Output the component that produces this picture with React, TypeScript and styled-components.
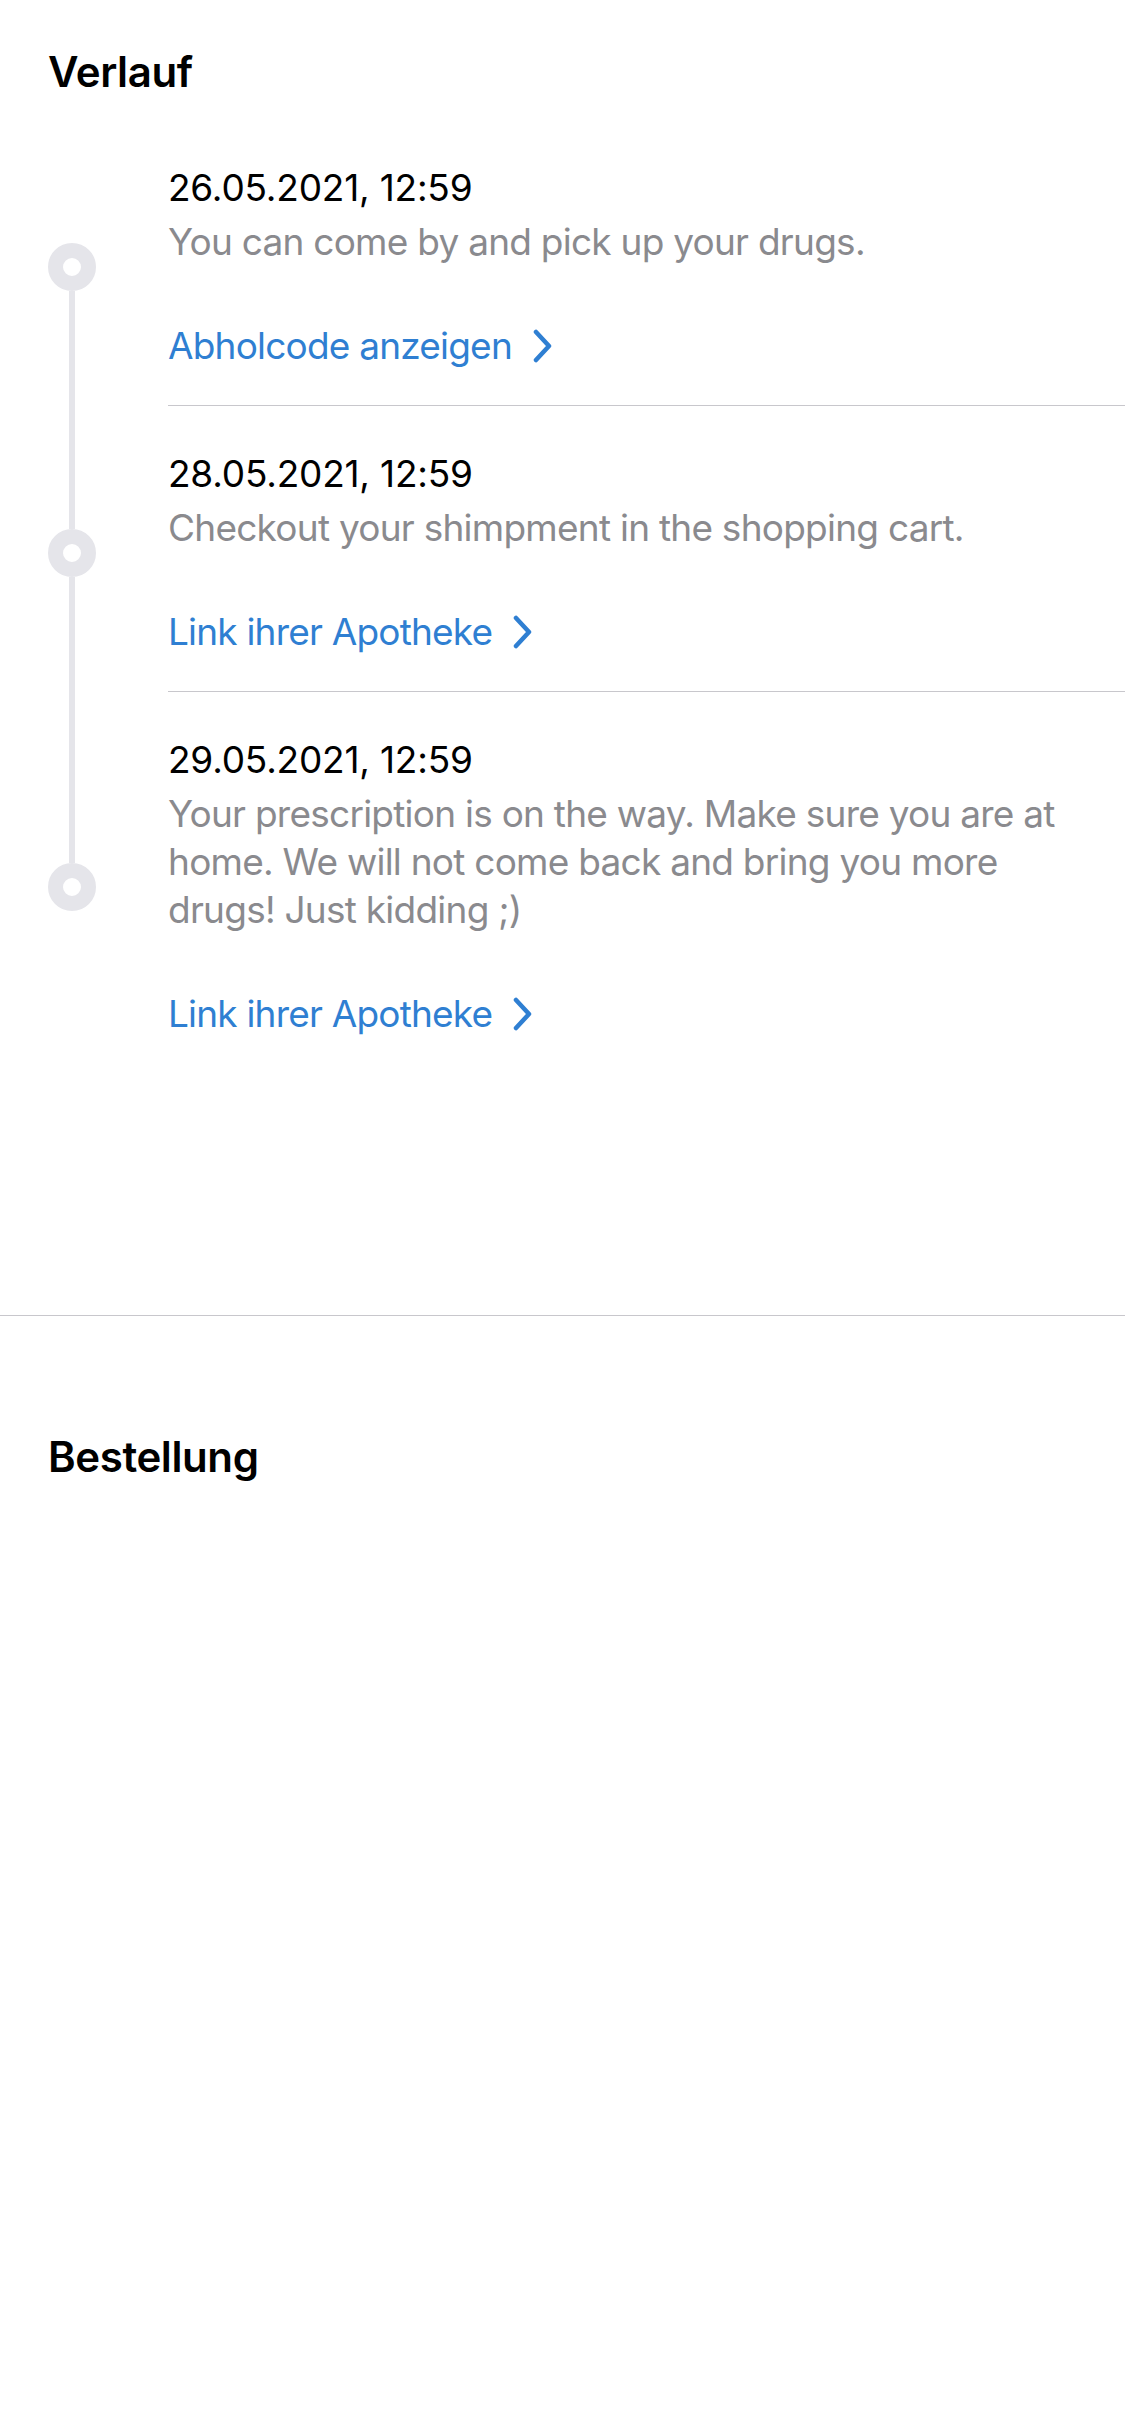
import React from "react";
import styled, { createGlobalStyle } from "styled-components";

const GlobalStyle = createGlobalStyle`
  html, body {
    margin: 0;
    padding: 0;
    background: #ffffff;
  }
  body {
    font-family: Inter, "Noto Sans", "Liberation Sans", sans-serif;
    -webkit-font-smoothing: antialiased;
  }
`;

const Page = styled.div`
  width: 1125px;
  min-height: 2436px;
  background: #ffffff;
  display: flex;
  flex-direction: column;
`;

const Section = styled.section<{ $padTop: number }>`
  display: flex;
  flex-direction: column;
  padding-top: ${(p) => p.$padTop}px;
`;

const SectionTitle = styled.h2`
  margin: 0;
  padding-left: 48px;
  font-family: Inter, "Liberation Sans", sans-serif;
  font-size: 42px;
  line-height: 50px;
  font-weight: 600;
  color: #000000;
  letter-spacing: -0.4px;
`;

const Timeline = styled.div`
  display: flex;
  flex-direction: column;
  padding-left: 48px;
  margin-top: 23px;
`;

const Item = styled.div`
  display: flex;
  align-items: stretch;
`;

const Rail = styled.div`
  width: 48px;
  flex: 0 0 48px;
  display: flex;
  flex-direction: column;
  align-items: center;
`;

const Segment = styled.div<{ $hidden: boolean; $base: number }>`
  flex: 1 1 ${(p) => p.$base}px;
  width: 6px;
  background: ${(p) => (p.$hidden ? "transparent" : "#E5E5EA")};
`;

const Dot = styled.div`
  flex: 0 0 48px;
  width: 48px;
  height: 48px;
  box-sizing: border-box;
  border-radius: 50%;
  border: 15px solid #e5e5ea;
  background: #ffffff;
`;

const Body = styled.div<{ $divider: boolean }>`
  flex: 1;
  margin-left: 72px;
  padding: 44px 48px 35px 0;
  border-bottom: 1px solid ${(p) => (p.$divider ? "#C8C7CC" : "transparent")};
  display: flex;
  flex-direction: column;
`;

const DateText = styled.div`
  font-size: 37px;
  line-height: 48px;
  color: #000000;
  letter-spacing: -0.2px;
  margin-bottom: 6px;
`;

const Desc = styled.div`
  font-size: 37px;
  line-height: 48px;
  color: #8a8a8e;
  letter-spacing: -0.75px;
`;

const LinkRow = styled.a`
  margin-top: 56px;
  display: flex;
  align-items: center;
  gap: 20px;
  font-size: 37px;
  line-height: 48px;
  color: #2f7fd2;
  letter-spacing: -0.8px;
  text-decoration: none;
  align-self: flex-start;
  cursor: pointer;
`;

const Chevron = () => (
  <svg width="22" height="34" viewBox="0 0 22 34" aria-hidden="true">
    <path
      d="M4 3 L17 17 L4 31"
      fill="none"
      stroke="#2f7fd2"
      strokeWidth="4.5"
      strokeLinecap="round"
      strokeLinejoin="round"
    />
  </svg>
);

const FullDivider = styled.hr`
  margin: 241px 0 0 0;
  border: none;
  height: 1px;
  background: #c8c7cc;
  width: 100%;
`;

type Entry = { date: string; text: string; link: string };

const entries: Entry[] = [
  {
    date: "26.05.2021, 12:59",
    text: "You can come by and pick up your drugs.",
    link: "Abholcode anzeigen",
  },
  {
    date: "28.05.2021, 12:59",
    text: "Checkout your shimpment in the shopping cart.",
    link: "Link ihrer Apotheke",
  },
  {
    date: "29.05.2021, 12:59",
    text: "Your prescription is on the way. Make sure you are at home. We will not come back and bring you more drugs! Just kidding ;)",
    link: "Link ihrer Apotheke",
  },
];

export default function App() {
  return (
    <>
      <GlobalStyle />
      <Page>
        <Section $padTop={47}>
          <SectionTitle>Verlauf</SectionTitle>
          <Timeline>
            {entries.map((e, i) => {
              const first = i === 0;
              const last = i === entries.length - 1;
              return (
                <Item key={i}>
                  <Rail>
                    <Segment $hidden={first} $base={7} />
                    <Dot />
                    <Segment $hidden={last} $base={0} />
                  </Rail>
                  <Body $divider={!last}>
                    <DateText>{e.date}</DateText>
                    <Desc>{e.text}</Desc>
                    <LinkRow>
                      <span>{e.link}</span>
                      <Chevron />
                    </LinkRow>
                  </Body>
                </Item>
              );
            })}
          </Timeline>
        </Section>
        <FullDivider />
        <Section $padTop={116}>
          <SectionTitle>Bestellung</SectionTitle>
        </Section>
      </Page>
    </>
  );
}
